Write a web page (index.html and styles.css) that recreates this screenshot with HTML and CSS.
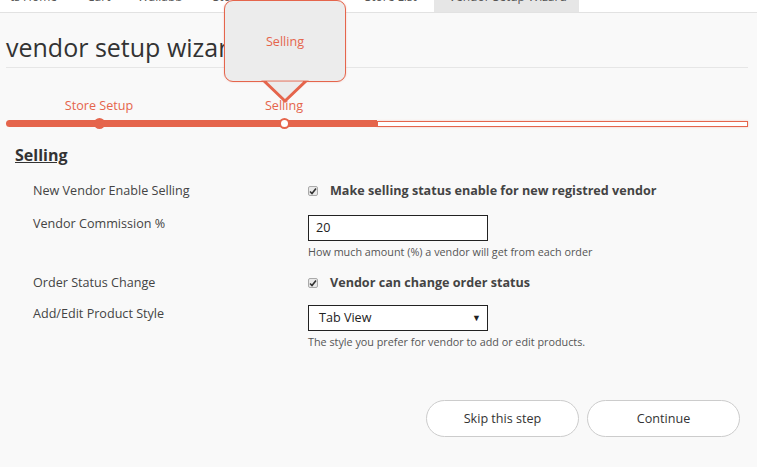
FILE: index.html
```html
<!DOCTYPE html>
<html>
<head>
<meta charset="utf-8">
<link rel="stylesheet" href="styles.css">
</head>
<body>
<nav class="topnav">
  <ul class="menu">
    <li class="m1">ts Home</li>
    <li class="m2">Cart</li>
    <li class="m3">Wallabb</li>
    <li class="m4">Sto</li>
    <li class="m5">Store List</li>
    <li class="m6 active"><span>Vendor Setup Wizard</span></li>
  </ul>
</nav>
<main class="page">
  <h1 class="title">vendor setup wizard</h1>
  <div class="steps">
    <div class="labels">
      <span class="lbl lbl1">Store Setup</span>
      <span class="lbl lbl2">Selling</span>
    </div>
    <div class="track">
      <div class="fill"></div>
      <div class="rest"></div>
      <span class="dot dot1"></span>
      <span class="dot dot2"></span>
    </div>
    <div class="tip">
      <span>Selling</span>
      <svg class="tip-arrow" width="50" height="24" viewBox="0 0 50 24"><polygon points="3,0 25,21 47,0" fill="#ececec" stroke="#e5654c" stroke-width="3" stroke-linejoin="miter"/><rect x="0" y="-2" width="50" height="2.6" fill="#ececec"/></svg>
    </div>
  </div>
  <h2 class="section">Selling</h2>
  <div class="form">
    <div class="row">
      <div class="label">New Vendor Enable Selling</div>
      <div class="field"><label class="check"><span class="box"><svg width="8" height="8" viewBox="0 0 8 8"><path d="M1 4.5 L3 6.5 L7 1.5" fill="none" stroke="#333" stroke-width="1.6"/></svg></span><b>Make selling status enable for new registred vendor</b></label></div>
    </div>
    <div class="row">
      <div class="label">Vendor Commission %</div>
      <div class="field"><div class="input">20</div><div class="help">How much amount (%) a vendor will get from each order</div></div>
    </div>
    <div class="row row-tight">
      <div class="label">Order Status Change</div>
      <div class="field"><label class="check"><span class="box"><svg width="8" height="8" viewBox="0 0 8 8"><path d="M1 4.5 L3 6.5 L7 1.5" fill="none" stroke="#333" stroke-width="1.6"/></svg></span><b>Vendor can change order status</b></label></div>
    </div>
    <div class="row">
      <div class="label">Add/Edit Product Style</div>
      <div class="field"><div class="input select"><span>Tab View</span><span class="caret">▼</span></div><div class="help">The style you prefer for vendor to add or edit products.</div></div>
    </div>
  </div>
  <div class="actions">
    <button class="btn">Skip this step</button>
    <button class="btn">Continue</button>
  </div>
</main>
</body>
</html>
```
FILE: styles.css
```css
* { box-sizing: border-box; }
html, body { margin: 0; padding: 0; }
body {
  background: #f9f9f9;
  font-family: "Open Sans", "Liberation Sans", sans-serif;
  color: #333;
  width: 757px;
  height: 467px;
  overflow: hidden;
}
.topnav {
  height: 13px;
  background: #fff;
  border-bottom: 1px solid #e2e2e2;
  overflow: hidden;
}
.menu {
  list-style: none;
  margin: 0;
  padding: 0;
  display: flex;
  height: 12px;
  font-size: 12px;
  color: #555;
}
.menu li {
  line-height: 12px;
  transform: translateY(-9px);
  white-space: nowrap;
}
.m1 { margin-left: 10px; }
.m2 { margin-left: 30px; }
.m3 { margin-left: 27px; }
.m4 { margin-left: 30px; }
.m5 { margin-left: 134px; }
.menu li.active {
  margin-left: 17px;
  background: #e6e6e6;
  width: 145px;
  padding: 0 0 0 15px;
  transform: none;
}
.menu li.active span { display: block; transform: translateY(-9px); }
.page { padding: 0 9px 0 6px; position: relative; }
.title {
  margin: 16px 0 0;
  font-size: 25px;
  font-weight: 400;
  line-height: 36px;
  color: #333;
  padding-bottom: 2px;
  border-bottom: 1px solid #e6e6e6;
}
.steps { position: relative; height: 62px; }
.labels { position: relative; height: 52px; font-size: 12.6px; color: #e5654c; }
.lbl { position: absolute; top: 29px; transform: translateX(-50%); white-space: nowrap; }
.lbl1 { left: 93px; }
.lbl2 { left: 278px; }
.track { position: relative; display: flex; height: 7px; }
.fill { width: 371px; height: 7px; background: #e5654c; border-radius: 4px 0 0 4px; }
.rest { flex: 1; height: 6px; margin-top: 0.5px; background: #fff; border: 1px solid #e5654c; box-shadow: 0 0 2px rgba(229,101,76,.4); }
.dot { position: absolute; top: -2px; width: 11px; height: 11px; border-radius: 50%; }
.dot1 { left: 88px; background: #e5654c; }
.dot2 { left: 273px; background: #fff; border: 2px solid #e5654c; }
.tip {
  position: absolute;
  left: 218px;
  top: -68px;
  width: 122px;
  height: 82px;
  background: #ececec;
  border: 1px solid #e5654c;
  border-radius: 9px;
  display: flex;
  align-items: center;
  justify-content: center;
  font-size: 12.6px;
  color: #e5654c;
  box-shadow: 0 0 2px rgba(229,101,76,.35);
}
.tip-arrow { position: absolute; left: 35px; bottom: -23px; }
.section {
  margin: 14px 0 0 9px;
  font-size: 16px;
  font-weight: 700;
  text-decoration: underline;
  color: #333;
  line-height: 22px;
}
.form { margin-top: 16px; }
.row { display: flex; font-size: 12.6px; margin-bottom: 15px; }
.row-tight { margin-bottom: 13px; }
.label { width: 302px; padding-left: 27px; color: #444; line-height: 18px; }
.field { flex: none; }
.check { display: flex; align-items: center; line-height: 18px; color: #444; }
.check b { font-weight: 700; }
.box {
  width: 10px; height: 10px;
  border: 1px solid #aaa;
  border-radius: 2px;
  background: #e9e9e9;
  display: inline-flex; align-items: center; justify-content: center;
  margin-right: 12px;
}
.input {
  width: 180px;
  height: 26px;
  border: 1px solid #222;
  background: #fff;
  padding: 0 7px;
  line-height: 24px;
  color: #222;
}
.select { display: flex; justify-content: space-between; padding: 0 6px 0 10px; }
.caret { font-size: 9px; }
.help { font-size: 10.8px; color: #555; line-height: 15px; margin-top: 3px; }
.actions { display: flex; justify-content: flex-end; gap: 8px; margin-top: 51px; padding-right: 8px; }
.btn {
  width: 153px;
  height: 37px;
  border: 1px solid #ccc;
  border-radius: 19px;
  background: #fff;
  font-family: "Open Sans", "Liberation Sans", sans-serif;
  font-size: 12.6px;
  color: #333;
}
```
